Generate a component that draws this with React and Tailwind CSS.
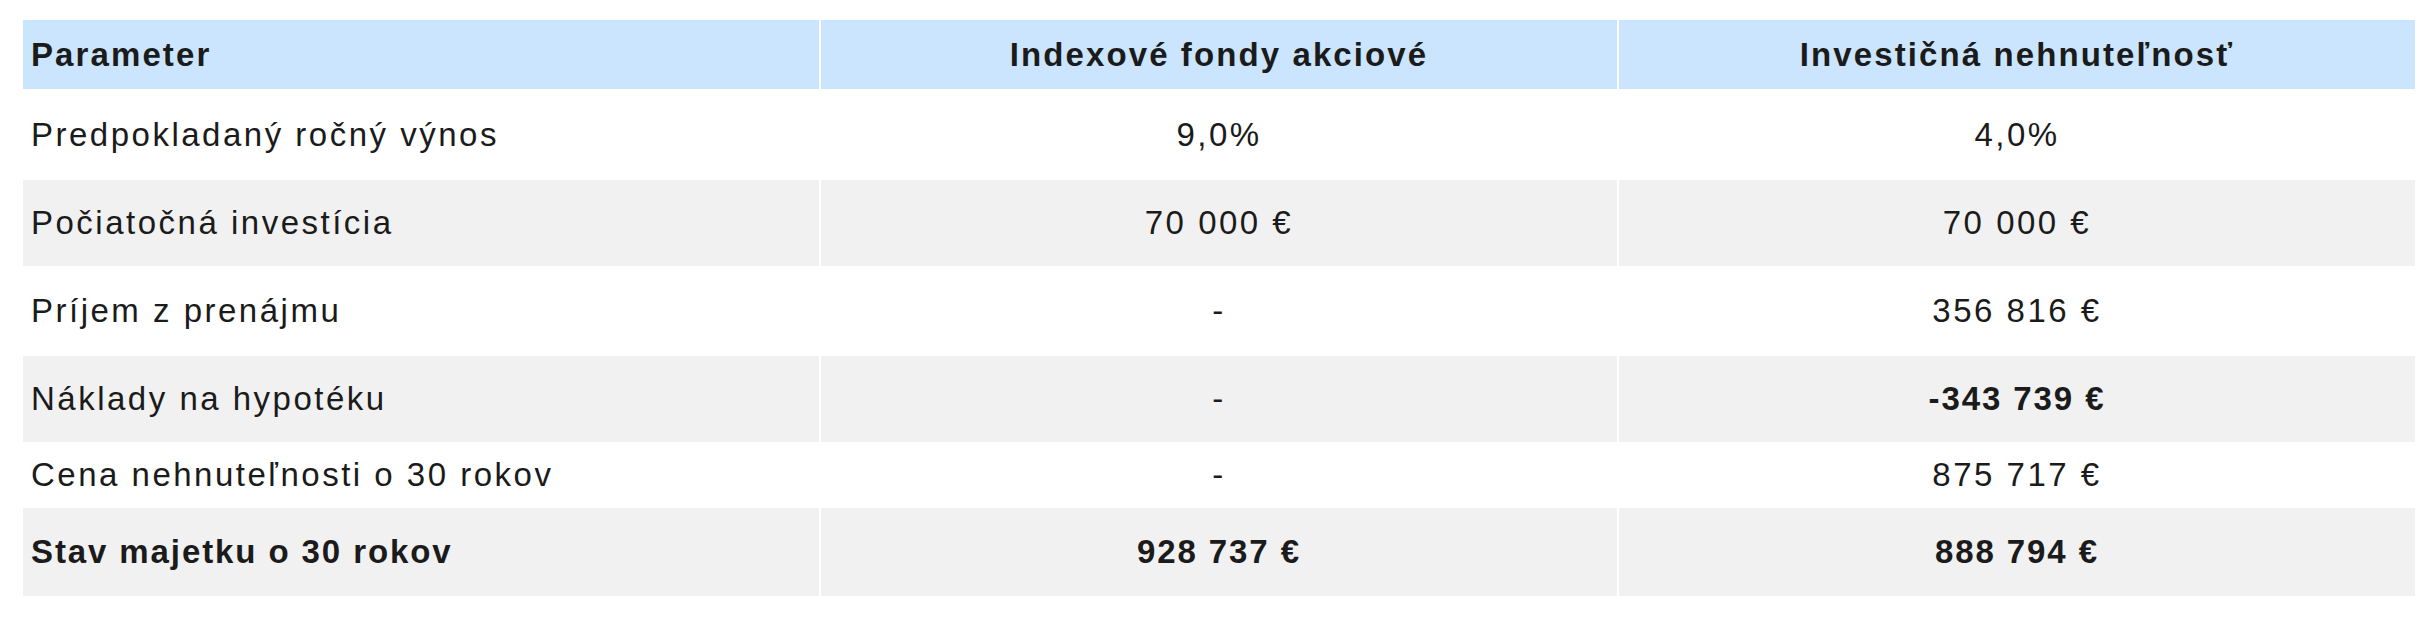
import React from "react";

const rows = [
  { label: "Predpokladaný ročný výnos", a: "9,0%", b: "4,0%", h: "h-[91px]", bg: "bg-white" },
  { label: "Počiatočná investícia", a: "70 000 €", b: "70 000 €", h: "h-[86px]", bg: "bg-[#f1f1f1]" },
  { label: "Príjem z prenájmu", a: "-", b: "356 816 €", h: "h-[90px]", bg: "bg-white" },
  { label: "Náklady na hypotéku", a: "-", b: "-343 739 €", h: "h-[86px]", bg: "bg-[#f1f1f1]", bBold: true },
  { label: "Cena nehnuteľnosti o 30 rokov", a: "-", b: "875 717 €", h: "h-[66px]", bg: "bg-white" },
  { label: "Stav majetku o 30 rokov", a: "928 737 €", b: "888 794 €", h: "h-[88px]", bg: "bg-[#f1f1f1]", allBold: true },
];

export default function App() {
  return (
    <div className="w-[2434px] h-[618px] bg-white pt-[20px] pl-[23px] text-[#1b1b1b] text-[33px] tracking-[2.5px] [font-family:'Liberation_Sans',Arial,sans-serif]">
      <div className="w-[2392px] flex flex-col">
        <div className="grid grid-cols-3 gap-x-[2px] h-[69px] font-bold tracking-[2.1px]">
          <div className="bg-[#cae5fd] flex items-center pl-[8px]">Parameter</div>
          <div className="bg-[#cae5fd] flex items-center justify-center">Indexové fondy akciové</div>
          <div className="bg-[#cae5fd] flex items-center justify-center">Investičná nehnuteľnosť</div>
        </div>
        {rows.map((r, i) => (
          <div key={i} className={`grid grid-cols-3 gap-x-[2px] ${r.h} ${r.allBold ? "font-bold tracking-[1.9px]" : ""}`}>
            <div className={`${r.bg} flex items-center pl-[8px]`}>{r.label}</div>
            <div className={`${r.bg} flex items-center justify-center`}>{r.a}</div>
            <div className={`${r.bg} flex items-center justify-center ${r.bBold ? "font-bold tracking-[1.9px]" : ""}`}>{r.b}</div>
          </div>
        ))}
      </div>
    </div>
  );
}
